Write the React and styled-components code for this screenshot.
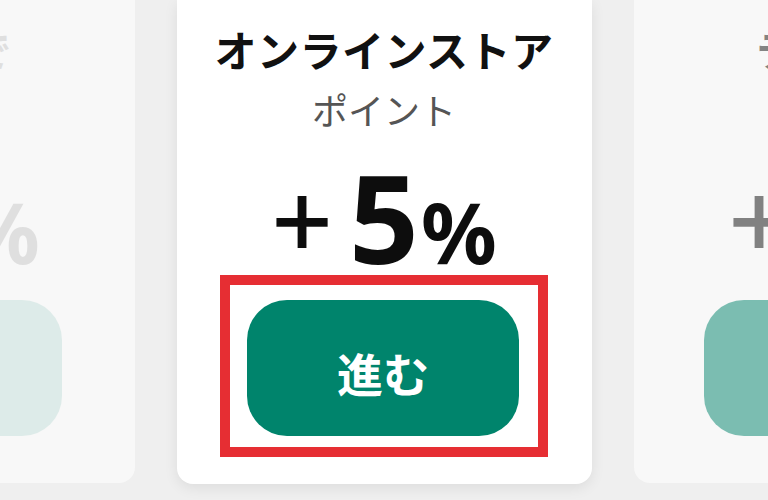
import styled, { createGlobalStyle } from "styled-components";

const GlobalStyle = createGlobalStyle`
	html, body {
		margin: 0;
		padding: 0;
		background: #efefef;
	}
	body {
		font-family: "Noto Sans CJK JP", "Noto Sans", sans-serif;
	}
`;

const Stage = styled.div`
	width: 768px;
	height: 500px;
	overflow: hidden;
	display: flex;
	justify-content: center;
	align-items: flex-start;
	gap: 42px;
`;

const Card = styled.div`
	flex: 0 0 415px;
	height: ${(props) => (props.$active ? "484px" : "483px")};
	box-sizing: border-box;
	padding-top: 28px;
	background: ${(props) => (props.$active ? "#ffffff" : "#f8f8f8")};
	border-radius: 0 0 16px 16px;
	box-shadow: ${(props) =>
		props.$active ? "0 4px 14px rgba(0, 0, 0, 0.08)" : "none"};
	display: flex;
	flex-direction: column;
	align-items: center;
`;

const Content = styled.div`
	display: flex;
	flex-direction: column;
	align-items: center;
	opacity: ${(props) => props.$opacity};
`;

const Title = styled.h2`
	margin: 0;
	font-size: 42px;
	line-height: 1;
	font-weight: 700;
	letter-spacing: 0.5px;
	color: #111;
	white-space: nowrap;
`;

const Sub = styled.p`
	margin: 21px 0 0;
	font-size: 36px;
	line-height: 1;
	font-weight: 400;
	color: #555;
	white-space: nowrap;
`;

const Value = styled.div`
	margin-top: 29px;
	height: 120px;
	display: flex;
	align-items: baseline;
	line-height: 1;
	color: #0d0d0d;
	font-family: "Noto Sans", "Noto Sans CJK JP", sans-serif;
	font-weight: 700;
	white-space: nowrap;
`;

const Plus = styled.span`
	font-size: 108px;
	font-weight: 500;
	margin-right: 16px;
	position: relative;
	top: -4px;
`;

const Num = styled.span`
	font-size: 122px;
	margin-right: 2px;
`;

const Pct = styled.span`
	font-size: 84px;
`;

const Frame = styled.div`
	margin-top: -1px;
	padding: 15px 19px 11px 17px;
	border: 10px solid ${(props) => (props.$marked ? "#e62e33" : "transparent")};
`;

const GoButton = styled.button`
	width: 272px;
	height: 136px;
	border: none;
	border-radius: 40px;
	background: #00846c;
	color: #fff;
	font-family: inherit;
	font-size: 46px;
	font-weight: 700;
	line-height: 1;
	padding-top: 8px;
	cursor: pointer;
`;

const cards = [
	{ title: "ご来店で", rate: "3", opacity: 0.1 },
	{ title: "オンラインストア", rate: "5", opacity: 1, active: true },
	{ title: "テナント", rate: "3", opacity: 0.5 },
];

const App = () => {
	return (
		<>
			<GlobalStyle />
			<Stage>
				{cards.map((card) => (
					<Card key={card.title} $active={card.active}>
						<Content $opacity={card.opacity}>
							<Title>{card.title}</Title>
							<Sub>ポイント</Sub>
							<Value>
								<Plus>+</Plus>
								<Num>{card.rate}</Num>
								<Pct>%</Pct>
							</Value>
							<Frame $marked={card.active}>
								<GoButton>進む</GoButton>
							</Frame>
						</Content>
					</Card>
				))}
			</Stage>
		</>
	);
};

export default App;
